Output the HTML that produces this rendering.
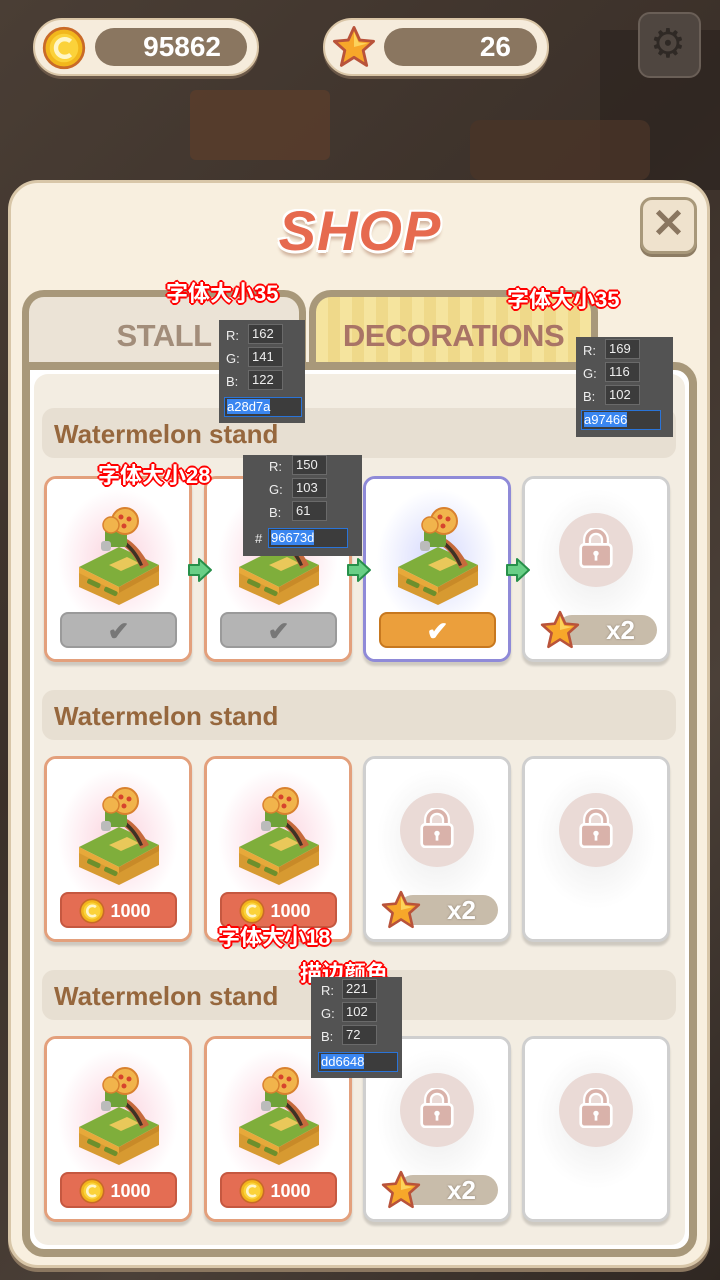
<!DOCTYPE html>
<html><head><meta charset="utf-8">
<style>
*{margin:0;padding:0;box-sizing:border-box}
body{width:720px;height:1280px;overflow:hidden;position:relative;font-family:"Liberation Sans","Noto Sans CJK SC",sans-serif;background:#3a3029}
.a{position:absolute}
.bg1{left:0;top:0;width:720px;height:1280px;background:linear-gradient(135deg,#4a3e35 0%,#3b3029 40%,#4b4038 70%,#2f2722 100%)}
.pill{height:58px;border-radius:29px;background:#f6ecdc;border:2px solid #d9c5a6;box-shadow:0 3px 0 #6b5848}
.pin{height:38px;border-radius:19px;background:#8a7660;color:#fff;font-weight:bold;font-size:28px;text-align:right;line-height:38px;padding-right:26px}
.panel{left:8px;top:180px;width:702px;height:1088px;border-radius:30px;background:#f8efdf;border:3px solid #d8c6a8;box-shadow:0 4px 0 #8b7760}
.title{left:0;width:720px;top:198px;text-align:center;font-size:56px;font-weight:900;font-style:italic;color:#e66a4f;letter-spacing:1px;text-shadow:2px 2px 0 #fff,-2px -2px 0 #fff,2px -2px 0 #fff,-2px 2px 0 #fff,0 3px 0 #fff,0 6px 3px rgba(150,90,60,.4)}
.close{left:640px;top:197px;width:57px;height:57px;border-radius:12px;background:#efe2cd;border:3px solid #a8987a;box-shadow:0 3px 0 #8d7c63;color:#8a7660;font-size:40px;font-weight:900;text-align:center;line-height:48px}
.tab{top:290px;height:80px;border:7px solid #a8987a;border-bottom:none;border-radius:22px 22px 0 0;text-align:center;font-weight:bold;font-size:31px;letter-spacing:-0.5px;line-height:78px}
.frame{left:22px;top:362px;width:675px;height:895px;border:8px solid #a8987a;border-radius:0 22px 22px 22px;background:#fff}
.inner{left:34px;top:374px;width:651px;height:871px;border-radius:14px;background:#f3ede2}
.sec{left:42px;width:634px;height:50px;border-radius:12px;background:#e7dfd2;color:#96673d;font-weight:bold;font-size:26px;line-height:52px;padding-left:12px}
.card{width:148px;height:186px;border-radius:12px;border:3px solid #e3a07c;background:#fff;box-shadow:0 4px 2px rgba(0,0,0,.15);overflow:hidden}
.card.cur{border-color:#8f8ad8}
.card.lk{border-color:#cfcfcf}
.glow{position:absolute;left:0;top:0;width:142px;height:180px;background:radial-gradient(ellipse 60px 70px at 71px 80px,#fbd3dc 0%,#fde8ee 50%,#fff 100%)}
.cur .glow{background:radial-gradient(ellipse 60px 70px at 71px 80px,#d4d8fd 0%,#e9ebfe 50%,#fff 100%)}
.lk .glow{background:radial-gradient(ellipse 60px 70px at 71px 80px,#eaeaea 0%,#f5f5f5 50%,#fff 100%)}
.st{position:absolute;left:22px;top:22px;width:100px;height:106px}
.btn{position:absolute;left:13px;top:133px;width:117px;height:36px;border-radius:8px;text-align:center;color:#fff;font-weight:bold;font-size:18px;line-height:34px}
.gb{background:#b4b4b4;border:2px solid #9a9a9a;color:#777;font-size:26px}
.ob{background:#eb9f3c;border:2px solid #c7781f;font-size:26px}
.rb{background:#e46d53;border:2px solid #c55840}
.lock{position:absolute;left:34px;top:34px;width:74px;height:74px;border-radius:50%;background:#eadad6}
.x2{position:absolute;left:32px;top:136px;width:100px;height:30px;border-radius:15px;background:#c8bcaa;color:#fff;font-weight:bold;font-size:26px;line-height:30px;text-align:right;padding-right:22px;text-shadow:0 0 2px #8a7e6e}
.arr{width:26px;height:26px}
.lbl{color:#fff;font-weight:bold;font-size:22px;text-shadow:2px 0 0 #f00,-2px 0 0 #f00,0 2px 0 #f00,0 -2px 0 #f00,1px 1px 0 #f00,-1px -1px 0 #f00,1px -1px 0 #f00,-1px 1px 0 #f00}
.pk{background:#535353;color:#eee;font-size:13px;font-family:"Liberation Sans",sans-serif}
.pk div{position:absolute}
.pk .f{background:#3c3c3c;border:1px solid #6a6a6a;width:35px;height:20px;line-height:18px;padding-left:3px}
.pk .h{background:#3c3c3c;border:1px solid #2a74d8;height:20px;line-height:18px;padding-left:2px}
.pk .h span{background:#3a86f0;color:#fff}
</style></head><body>
<svg width="0" height="0" style="position:absolute">
<defs>
<symbol id="stn" viewBox="0 0 100 106">
<path d="M10 68 L50 88 L90 66 L90 84 L50 104 L10 86Z" fill="#d79a31"/>
<path d="M10 66 L50 46 L90 64 L50 86Z" fill="#7fae3b"/>
<path d="M10 66 L50 86 L50 92 L10 72Z" fill="#e7a93a"/>
<path d="M50 86 L90 64 L90 70 L50 92Z" fill="#c88a28"/>
<rect x="18" y="80" width="14" height="5" rx="2" fill="#6d8f2c" transform="rotate(25 25 82)"/>
<rect x="35" y="88" width="14" height="5" rx="2" fill="#6d8f2c" transform="rotate(25 42 90)"/>
<path d="M40 64 L58 56 L70 62 L52 70Z" fill="#e9c85a"/>
<path d="M54 36 C64 40 74 52 80 64 L72 68 C66 56 60 48 52 44Z" fill="#c66a3c"/>
<path d="M56 40 C64 46 70 54 74 64 L71 65 C66 55 61 48 54 43Z" fill="#3d3325"/>
<rect x="36" y="28" width="22" height="18" rx="3" fill="#6fa23a"/>
<rect x="32" y="40" width="10" height="10" rx="3" fill="#bbb"/>
<circle cx="56" cy="20" r="13" fill="#f1b44c" stroke="#d9812e" stroke-width="2"/>
<circle cx="52" cy="16" r="2.5" fill="#d6442d"/><circle cx="60" cy="18" r="2.5" fill="#d6442d"/><circle cx="55" cy="25" r="2.5" fill="#d6442d"/>
<circle cx="42" cy="24" r="8" fill="#f1b44c" stroke="#d9812e" stroke-width="1.5"/>
</symbol>
<symbol id="lock" viewBox="0 0 40 44">
<path d="M10 20 V13 A10 10 0 0 1 30 13 V20" fill="none" stroke="#fff" stroke-width="9"/>
<path d="M10 20 V13 A10 10 0 0 1 30 13 V20" fill="none" stroke="#d9b2aa" stroke-width="4"/>
<rect x="3" y="18" width="34" height="25" rx="4" fill="#d9b2aa" stroke="#fff" stroke-width="3"/>
<circle cx="20" cy="28" r="3" fill="#fff"/><rect x="18.5" y="28" width="3" height="8" fill="#fff"/>
</symbol>
<symbol id="star" viewBox="0 0 40 40">
<path d="M20 3 L25 14 L37 15 L28 23 L31 36 L20 29 L9 36 L12 23 L3 15 L15 14Z" fill="#f7a72a" stroke="#b9533a" stroke-width="2.5" stroke-linejoin="round"/>
<path d="M20 7 L24 16 L32 17 L20 20Z" fill="#fcd35c"/>
</symbol>
<symbol id="coin" viewBox="0 0 40 40">
<circle cx="20" cy="20" r="18" fill="#f2b71c" stroke="#c96a28" stroke-width="2.5"/>
<circle cx="20" cy="20" r="13" fill="#fbd23a"/>
<path d="M26 14 A8 8 0 1 0 26 26" fill="none" stroke="#fff6c8" stroke-width="4"/>
</symbol>
<symbol id="ar" viewBox="0 0 26 26">
<path d="M2 8 H12 V2 L24 13 L12 24 V18 H2Z" fill="#69cf86" stroke="#27904a" stroke-width="2" stroke-linejoin="round"/>
</symbol>
</defs></svg>

<div class="a bg1"></div>
<div class="a" style="left:600px;top:30px;width:120px;height:160px;background:#2a221e;opacity:.6"></div>
<div class="a" style="left:190px;top:90px;width:140px;height:70px;background:#5a3d2c;opacity:.8;border-radius:6px"></div>
<div class="a" style="left:470px;top:120px;width:180px;height:60px;background:#4a3428;opacity:.8;border-radius:10px"></div>

<div class="a pill" style="left:33px;top:18px;width:226px"></div>
<svg class="a" style="left:42px;top:26px" width="44" height="44"><use href="#coin"/></svg>
<div class="a pin" style="left:95px;top:28px;width:152px">95862</div>
<div class="a pill" style="left:323px;top:18px;width:226px"></div>
<svg class="a" style="left:331px;top:24px" width="46" height="46"><use href="#star"/></svg>
<div class="a pin" style="left:384px;top:28px;width:153px">26</div>
<div class="a" style="left:638px;top:12px;width:63px;height:66px;border-radius:12px;background:#4f4640;border:2px solid #6a5f57"></div>
<div class="a" style="left:650px;top:24px;font-size:40px;color:#2f2925;line-height:40px">⚙</div>

<div class="a panel"></div>
<div class="a title">SHOP</div>
<div class="a close">✕</div>

<div class="a tab" style="left:22px;width:284px;background:#ebe3d6;color:#a28d7a">STALL</div>
<div class="a tab" style="left:309px;width:289px;background:repeating-linear-gradient(90deg,#f5e49e 0 12px,#efd98a 12px 24px);color:#a97466">DECORATIONS</div>
<div class="a frame"></div>
<div class="a inner"></div>

<div class="a sec" style="top:408px">Watermelon stand</div>
<div class="a sec" style="top:690px">Watermelon stand</div>
<div class="a sec" style="top:970px">Watermelon stand</div>

<!-- row1 -->
<div class="a card" style="left:44px;top:476px"><div class="glow"></div><svg class="st"><use href="#stn"/></svg><div class="btn gb">✔</div></div>
<div class="a card" style="left:204px;top:476px"><div class="glow"></div><svg class="st"><use href="#stn"/></svg><div class="btn gb">✔</div></div>
<div class="a card cur" style="left:363px;top:476px"><div class="glow"></div><svg class="st"><use href="#stn"/></svg><div class="btn ob">✔</div></div>
<div class="a card lk" style="left:522px;top:476px"><div class="glow"></div><div class="lock"><svg style="position:absolute;left:19px;top:15px" width="36" height="40"><use href="#lock"/></svg></div><div class="x2">x2</div><svg style="position:absolute;left:14px;top:130px" width="42" height="42"><use href="#star"/></svg></div>
<svg class="a arr" style="left:187px;top:557px"><use href="#ar"/></svg>
<svg class="a arr" style="left:346px;top:557px"><use href="#ar"/></svg>
<svg class="a arr" style="left:505px;top:557px"><use href="#ar"/></svg>

<!-- row2 -->
<div class="a card" style="left:44px;top:756px"><div class="glow"></div><svg class="st"><use href="#stn"/></svg><div class="btn rb"><svg style="position:absolute;left:17px;top:4px" width="26" height="26"><use href="#coin"/></svg><span style="padding-left:24px">1000</span></div></div>
<div class="a card" style="left:204px;top:756px"><div class="glow"></div><svg class="st"><use href="#stn"/></svg><div class="btn rb"><svg style="position:absolute;left:17px;top:4px" width="26" height="26"><use href="#coin"/></svg><span style="padding-left:24px">1000</span></div></div>
<div class="a card lk" style="left:363px;top:756px"><div class="glow"></div><div class="lock"><svg style="position:absolute;left:19px;top:15px" width="36" height="40"><use href="#lock"/></svg></div><div class="x2">x2</div><svg style="position:absolute;left:14px;top:130px" width="42" height="42"><use href="#star"/></svg></div>
<div class="a card lk" style="left:522px;top:756px"><div class="glow"></div><div class="lock"><svg style="position:absolute;left:19px;top:15px" width="36" height="40"><use href="#lock"/></svg></div></div>

<!-- row3 -->
<div class="a card" style="left:44px;top:1036px"><div class="glow"></div><svg class="st"><use href="#stn"/></svg><div class="btn rb"><svg style="position:absolute;left:17px;top:4px" width="26" height="26"><use href="#coin"/></svg><span style="padding-left:24px">1000</span></div></div>
<div class="a card" style="left:204px;top:1036px"><div class="glow"></div><svg class="st"><use href="#stn"/></svg><div class="btn rb"><svg style="position:absolute;left:17px;top:4px" width="26" height="26"><use href="#coin"/></svg><span style="padding-left:24px">1000</span></div></div>
<div class="a card lk" style="left:363px;top:1036px"><div class="glow"></div><div class="lock"><svg style="position:absolute;left:19px;top:15px" width="36" height="40"><use href="#lock"/></svg></div><div class="x2">x2</div><svg style="position:absolute;left:14px;top:130px" width="42" height="42"><use href="#star"/></svg></div>
<div class="a card lk" style="left:522px;top:1036px"><div class="glow"></div><div class="lock"><svg style="position:absolute;left:19px;top:15px" width="36" height="40"><use href="#lock"/></svg></div></div>

<!-- annotations -->
<div class="a lbl" style="left:166px;top:276px">字体大小35</div>
<div class="a lbl" style="left:507px;top:282px">字体大小35</div>
<div class="a lbl" style="left:98px;top:458px">字体大小28</div>
<div class="a lbl" style="left:218px;top:920px">字体大小18</div>
<div class="a lbl" style="left:300px;top:956px">描边颜色</div>

<div class="a pk" style="left:219px;top:320px;width:86px;height:103px">
<div style="left:7px;top:8px">R:</div><div class="f" style="left:29px;top:4px">162</div>
<div style="left:7px;top:31px">G:</div><div class="f" style="left:29px;top:27px">141</div>
<div style="left:7px;top:54px">B:</div><div class="f" style="left:29px;top:50px">122</div>
<div class="h" style="left:5px;top:77px;width:78px"><span>a28d7a</span></div></div>

<div class="a pk" style="left:576px;top:337px;width:97px;height:100px">
<div style="left:7px;top:6px">R:</div><div class="f" style="left:29px;top:2px">169</div>
<div style="left:7px;top:29px">G:</div><div class="f" style="left:29px;top:25px">116</div>
<div style="left:7px;top:52px">B:</div><div class="f" style="left:29px;top:48px">102</div>
<div class="h" style="left:5px;top:73px;width:80px"><span>a97466</span></div></div>

<div class="a pk" style="left:243px;top:455px;width:119px;height:101px">
<div style="left:26px;top:4px">R:</div><div class="f" style="left:49px;top:0px">150</div>
<div style="left:26px;top:27px">G:</div><div class="f" style="left:49px;top:23px">103</div>
<div style="left:26px;top:50px">B:</div><div class="f" style="left:49px;top:46px">61</div>
<div style="left:12px;top:76px">#</div><div class="h" style="left:25px;top:73px;width:80px"><span>96673d</span></div></div>

<div class="a pk" style="left:311px;top:977px;width:91px;height:101px">
<div style="left:10px;top:6px">R:</div><div class="f" style="left:31px;top:2px">221</div>
<div style="left:10px;top:29px">G:</div><div class="f" style="left:31px;top:25px">102</div>
<div style="left:10px;top:52px">B:</div><div class="f" style="left:31px;top:48px">72</div>
<div class="h" style="left:7px;top:75px;width:80px"><span>dd6648</span></div></div>
</body></html>
